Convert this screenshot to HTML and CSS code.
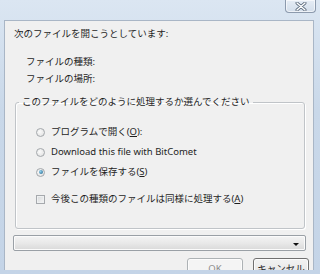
FILE: index.html
```html
<!DOCTYPE html>
<html>
  <head>
    <title>ファイルを開く</title>
    <meta charset="utf-8" />
    <link rel="stylesheet" href="styles.css">
  </head>
  <body>
    <div class="titlebar">
      <span class="close">
        <svg width="12" height="9" viewBox="0 0 12 9">
          <path d="M2 1 L10 8 M10 1 L2 8" stroke="#5b6a7c" stroke-width="3" stroke-linecap="round" />
          <path d="M2 1 L10 8 M10 1 L2 8" stroke="#fff" stroke-width="1.4" stroke-linecap="round" />
        </svg>
      </span>
    </div>
    <div class="panel">
      <p class="lead">次のファイルを開こうとしています:</p>
      <div class="info">
        <p>ファイルの種類:</p>
        <p>ファイルの場所:</p>
      </div>
      <fieldset class="group">
        <legend>このファイルをどのように処理するか選んでください</legend>
        <div class="option"><span class="radio"></span>プログラムで開く(<u>O</u>):</div>
        <div class="option"><span class="radio"></span>Download this file with BitComet</div>
        <div class="option"><span class="radio checked"></span>ファイルを保存する(<u>S</u>)</div>
        <div class="option check"><span class="box"></span>今後この種類のファイルは同様に処理する(<u>A</u>)</div>
      </fieldset>
      <div class="combo"><span class="arrow"></span></div>
      <div class="buttons">
        <span class="btn disabled">OK</span>
        <span class="btn">キャンセル</span>
      </div>
    </div>
  </body>
</html>
```
FILE: styles.css
```css
html, body {
  margin: 0;
  height: 274px;
  overflow: hidden;
}

body {
  background: linear-gradient(#dbe6f2, #c9d8e9 40%, #c4d4e7);
  font: 9.5px/14px "Noto Sans", "Noto Sans CJK JP", sans-serif;
  color: #1e1e1e;
}

.titlebar {
  height: 20px;
  display: flex;
  justify-content: flex-end;
  padding-right: 4px;
}

.close {
  width: 31px;
  height: 13px;
  box-sizing: border-box;
  border: 1px solid #8c9aad;
  border-top: none;
  border-radius: 0 0 4px 4px;
  background: linear-gradient(#e6edf5, #d3deeb);
  box-shadow: inset 0 0 0 1px rgba(255,255,255,0.6);
  display: flex;
  align-items: center;
  justify-content: center;
}

.panel {
  margin: 0 6px 0 4px;
  height: 250px;
  box-sizing: border-box;
  background: #f0f0f0;
  border: 1px solid #a9b6c6;
  border-bottom: none;
  padding: 6px 0 0 9px;
  overflow: hidden;
}

p {
  margin: 0;
}

.lead {
  line-height: 14px;
}

.info {
  padding: 12px 0 0 12px;
  line-height: 17px;
}

.group {
  margin: 8px 0 0 1px;
  width: 290px;
  height: 134px;
  box-sizing: border-box;
  padding: 13px 0 0 3px;
  border: 1px solid #c0c4c8;
  border-radius: 3px;
  box-shadow: inset 1px 1px 0 #fff, 1px 1px 0 #fff;
}

.group legend {
  padding: 0 3px;
  margin: 0;
  line-height: 14px;
}

.option {
  display: flex;
  align-items: center;
  height: 20px;
  margin-left: 17px;
}

.option.check {
  margin-top: 7px;
}

.radio {
  width: 9px;
  height: 9px;
  box-sizing: border-box;
  border-radius: 50%;
  border: 1px solid #a3a7ab;
  background: radial-gradient(circle at 40% 40%, #fbfbfb, #dcdcdc);
  margin-right: 6px;
  display: flex;
  align-items: center;
  justify-content: center;
}

.radio.checked::after {
  content: "";
  width: 4px;
  height: 4px;
  border-radius: 50%;
  background: radial-gradient(circle at 35% 35%, #8fd0ee, #1d5f86);
}

.box {
  width: 9px;
  height: 9px;
  box-sizing: border-box;
  border: 1px solid #a6a9ad;
  background: linear-gradient(135deg, #d6d8da, #f6f6f6);
  box-shadow: inset 0 0 0 1px #eef0f1;
  margin-right: 6px;
}

.combo {
  margin: 6px 0 0 -1px;
  width: 293px;
  height: 16px;
  box-sizing: border-box;
  border: 1px solid #9aa0a6;
  border-radius: 2px;
  background: linear-gradient(#f4f4f4, #e9e9e9 50%, #d9d9d9);
  box-shadow: inset 0 0 0 1px #fbfbfb;
  display: flex;
  align-items: center;
  justify-content: flex-end;
  padding-right: 6px;
}

.arrow {
  width: 0;
  height: 0;
  border-left: 3px solid transparent;
  border-right: 3px solid transparent;
  border-top: 3px solid #111;
  margin-top: 2px;
}

.buttons {
  display: flex;
  justify-content: flex-end;
  gap: 10px;
  margin: 7px 4px 0 0;
}

.btn {
  width: 56px;
  height: 20px;
  box-sizing: border-box;
  border: 1px solid #707070;
  border-radius: 3px;
  background: linear-gradient(#f2f2f2, #ebebeb 50%, #dddddd);
  box-shadow: inset 0 0 0 1px #fcfcfc;
  text-align: center;
  line-height: 18px;
  padding-top: 1px;
}

.btn.disabled {
  border-color: #adb2b5;
  background: #f4f4f4;
  color: #8e8e8e;
}
```
